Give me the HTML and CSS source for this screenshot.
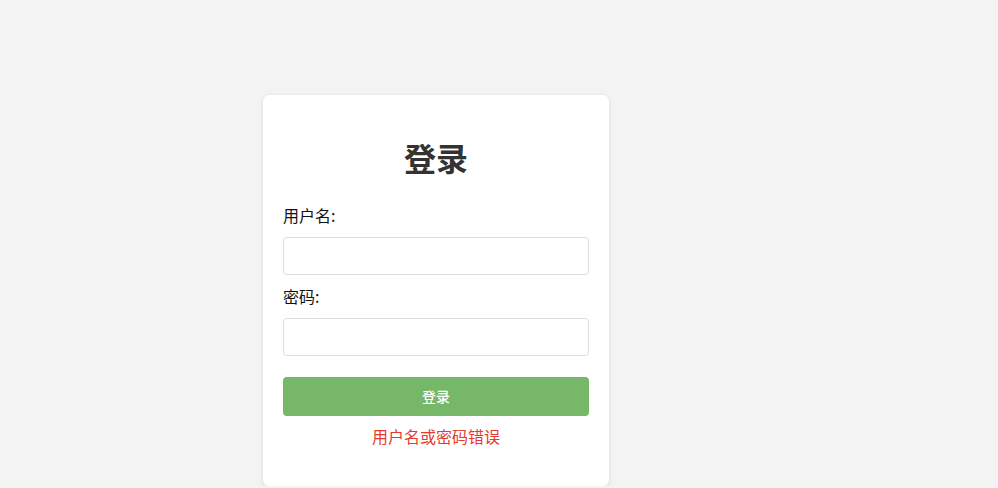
FILE: index.html
```html
<!DOCTYPE html>
<html lang="zh">
<head>
<meta charset="utf-8">
<title>登录</title>
<link rel="stylesheet" href="styles.css">
</head>
<body>
  <div class="page">
    <form class="card">
      <h2 class="title">登录</h2>
      <label class="label" for="username">用户名:</label>
      <input class="input" id="username" type="text">
      <label class="label" for="password">密码:</label>
      <input class="input" id="password" type="password">
      <button class="btn" type="button">登录</button>
      <p class="error">用户名或密码错误</p>
    </form>
  </div>
</body>
</html>
```
FILE: styles.css
```css
html, body {
  margin: 0;
  padding: 0;
  background: #f3f3f3;
  font-family: "Noto Sans CJK SC", "Noto Sans", sans-serif;
}
.page {
  padding: 95px 0 0 263px;
}
.card {
  width: 306px;
  padding: 20px;
  background: #fff;
  border-radius: 6px;
  box-shadow: 0 1px 4px rgba(0, 0, 0, 0.12);
  display: flex;
  flex-direction: column;
}
.title {
  margin: 22px 0 26px;
  font-size: 32px;
  line-height: 40px;
  font-weight: 700;
  color: #333;
  text-align: center;
}
.label {
  display: block;
  font-size: 16px;
  line-height: 24px;
  color: #111;
  margin-bottom: 10px;
}
.input {
  box-sizing: border-box;
  width: 100%;
  height: 38px;
  margin: 0 0 9px;
  padding: 0 10px;
  border: 1px solid #ddd;
  border-radius: 4px;
  background: #fff;
  font-size: 14px;
}
.btn {
  margin-top: 12px;
  height: 39px;
  padding: 0 0 2px;
  border: none;
  border-radius: 4px;
  background: #76b768;
  color: #fff;
  font-family: inherit;
  font-size: 14px;
  font-weight: 500;
}
.error {
  margin: 8px 0 18px;
  font-size: 16px;
  line-height: 24px;
  color: #e53a2c;
  text-align: center;
}
```
